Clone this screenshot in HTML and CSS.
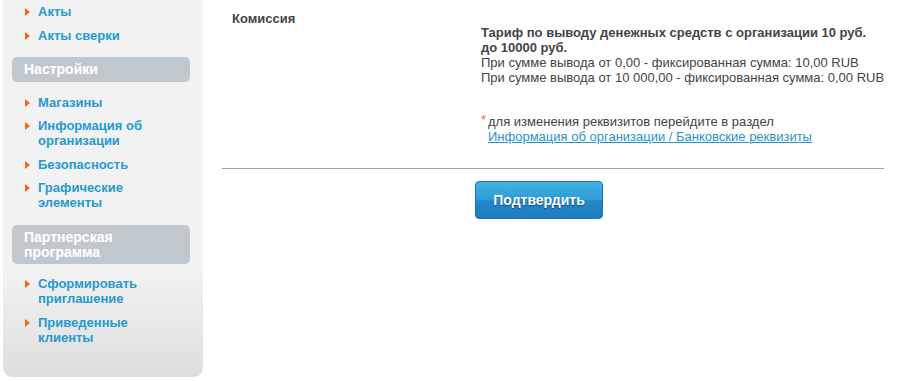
FILE: index.html
```html
<!DOCTYPE html>
<html lang="ru">
<head>
<meta charset="utf-8">
<title>Вывод средств</title>
<link rel="stylesheet" href="styles.css">
</head>
<body>
<div class="page">
  <aside class="sidebar">
    <ul class="menu">
      <li><a href="#">Акты</a></li>
      <li><a href="#">Акты сверки</a></li>
    </ul>
    <div class="menu-head">Настройки</div>
    <ul class="menu">
      <li><a href="#">Магазины</a></li>
      <li><a href="#">Информация об организации</a></li>
      <li><a href="#">Безопасность</a></li>
      <li><a href="#">Графические элементы</a></li>
    </ul>
    <div class="menu-head">Партнерская программа</div>
    <ul class="menu">
      <li><a href="#">Сформировать приглашение</a></li>
      <li><a href="#">Приведенные клиенты</a></li>
    </ul>
  </aside>
  <main class="content">
    <div class="row">
      <div class="label">Комиссия</div>
      <div class="value">
        <p class="tariff">Тариф по выводу денежных средств с организации 10 руб. до 10000 руб.</p>
        <p class="line">При сумме вывода от 0,00 - фиксированная сумма: 10,00 RUB</p>
        <p class="line">При сумме вывода от 10 000,00 - фиксированная сумма: 0,00 RUB</p>
        <div class="note">
          <span class="star">*</span>
          <div class="note-text">
            <p>для изменения реквизитов перейдите в раздел</p>
            <a href="#">Информация об организации / Банковские реквизиты</a>
          </div>
        </div>
      </div>
    </div>
    <hr class="sep">
    <div class="actions">
      <button class="btn" type="button">Подтвердить</button>
    </div>
  </main>
</div>
</body>
</html>
```

FILE: styles.css
```css
* { box-sizing: border-box; }
html, body { margin: 0; padding: 0; background: #fff; }
body {
  font-family: "Liberation Sans", Arial, sans-serif;
  font-size: 13px;
  color: #444;
}
.page {
  display: flex;
  align-items: flex-start;
  padding-left: 3px;
}
.sidebar {
  width: 200px;
  height: 377px;
  padding: 4px 13px 0 9px;
  background: linear-gradient(#f2f2f2 0%, #f2f2f2 72%, #dedede 100%);
  border-radius: 0 0 9px 9px;
  flex: none;
}
.menu {
  list-style: none;
  margin: 0;
  padding: 0 30px 0 13px;
}
.menu li {
  position: relative;
  padding-left: 13px;
  margin-bottom: 8.5px;
  line-height: 15px;
}
.menu li::before {
  content: "";
  position: absolute;
  left: 0;
  top: 4px;
  border-left: 5px solid #f5651c;
  border-top: 4px solid transparent;
  border-bottom: 4px solid transparent;
}
.menu a {
  font-size: 13px;
  font-weight: bold;
  color: #259ad2;
  text-decoration: none;
}
.menu-head {
  background: #c1c8cd;
  border-radius: 5px;
  color: #fff;
  font-weight: bold;
  font-size: 14px;
  line-height: 15px;
  min-height: 25px;
  padding: 5px 12px 4px;
  margin: 14.5px 0 12.5px;
}
.content {
  width: 662px;
  margin-left: 19px;
}
.row {
  display: grid;
  grid-template-columns: 259px 1fr;
  padding-top: 11px;
}
.label {
  padding-left: 10px;
  font-weight: bold;
  line-height: 15px;
  color: #444;
}
.value {
  padding-top: 14px;
  line-height: 15px;
  color: #444;
}
.value p { margin: 0; }
.value .line { white-space: nowrap; }
.tariff { font-weight: bold; }
.note {
  display: flex;
  margin-top: 29px;
}
.star {
  color: #f5651c;
  width: 7px;
  flex: none;
  line-height: 12px;
}
.note-text a {
  color: #1f94cf;
  text-decoration: underline;
}
.sep {
  border: 0;
  border-top: 1px solid #a3a3a3;
  margin: 24px 0 0;
  height: 0;
}
.actions {
  padding: 12px 0 0 253px;
}
.btn {
  width: 128px;
  height: 38px;
  border: 1px solid #1d76b0;
  border-radius: 4px;
  background: linear-gradient(#40b3e4 0%, #2f9bd6 50%, #2286c8 52%, #1e7cc0 100%);
  color: #fff;
  font-family: "Liberation Sans", Arial, sans-serif;
  font-size: 14px;
  font-weight: bold;
  text-shadow: 0 1px 1px rgba(0, 40, 80, 0.6);
  padding: 0;
  cursor: pointer;
}
```
